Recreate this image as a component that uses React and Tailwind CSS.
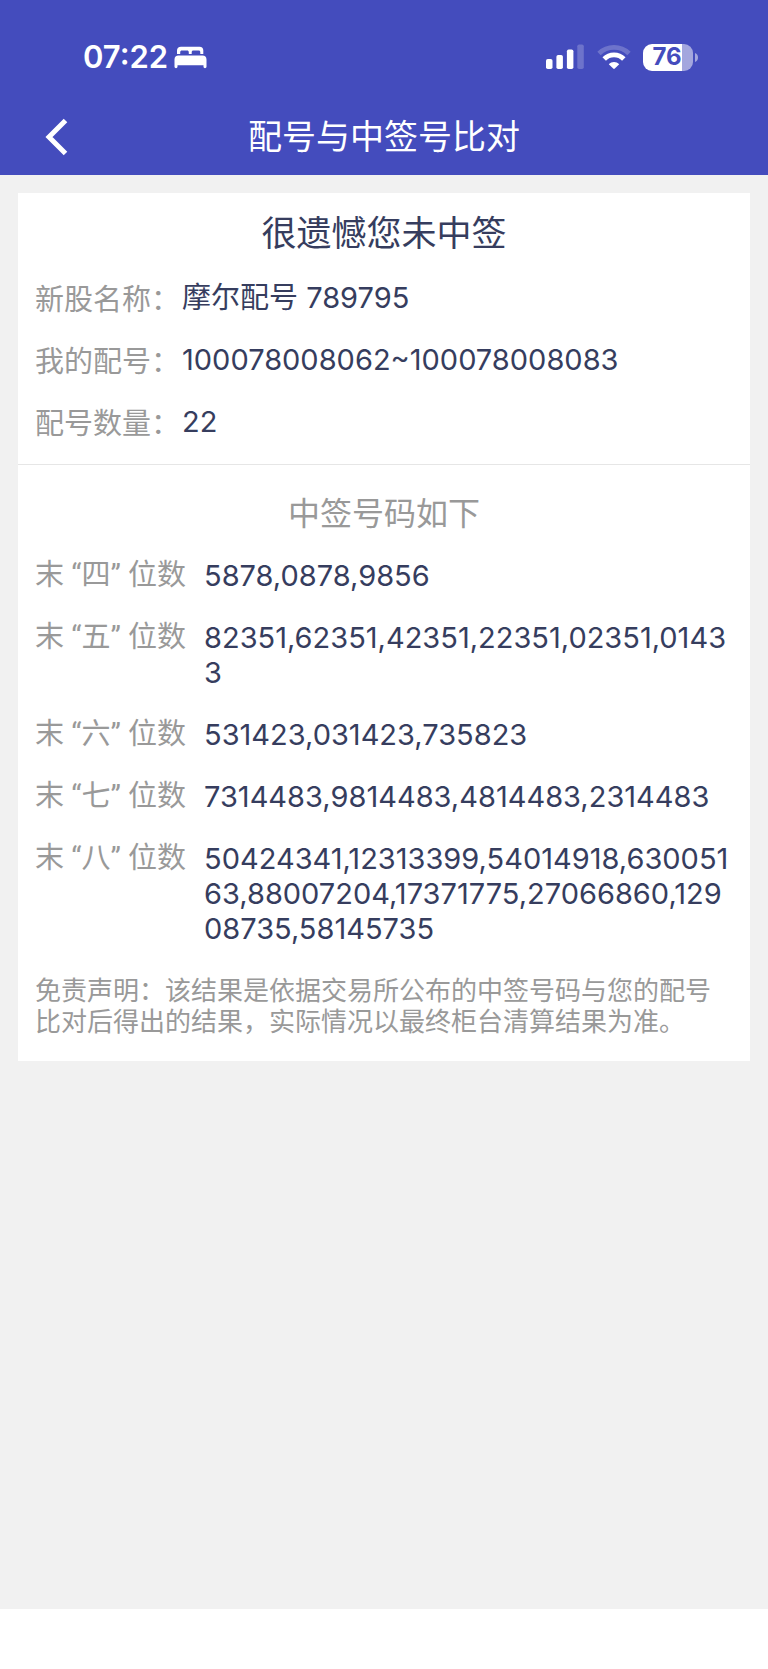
import React from 'react';

const stockInfo = [
  { label: '新股名称：', value: '摩尔配号 789795' },
  { label: '我的配号：', value: '100078008062~100078008083' },
  { label: '配号数量：', value: '22' }
];

const winningNumbers = [
  { digits: '四', numbers: ['5878', '0878', '9856'] },
  { digits: '五', numbers: ['82351', '62351', '42351', '22351', '02351', '01433'] },
  { digits: '六', numbers: ['531423', '031423', '735823'] },
  { digits: '七', numbers: ['7314483', '9814483', '4814483', '2314483'] },
  {
    digits: '八',
    numbers: [
      '50424341', '12313399', '54014918', '63005163', '88007204',
      '17371775', '27066860', '12908735', '58145735'
    ]
  }
];

const BedIcon = () => (
  <svg width="33" height="23" viewBox="0 0 33 23" fill="white" aria-hidden="true">
    <path d="M3 8V4.5C3 2 4.500 .7 7 .7H25.500C28 .7 29.300 2 29.300 4.500V8H26.300V6.500C26.300 5.200 25.700 4.600 24.500 4.600H19.500C18.300 4.600 17.700 5.200 17.700 6.500V8H14.800V6.500C14.800 5.200 14.200 4.600 13 4.600H8C6.800 4.600 6.200 5.200 6.200 6.500V8Z" />
    <path d="M.5 13.500C.5 10.800 2 9.500 4.500 9.500H28.500C31 9.500 32.500 10.800 32.500 13.500V20.800C32.500 22.600 29.500 22.600 29.500 20.800V19.300H3.500V20.800C3.500 22.600.5 22.600.5 20.800Z" />
  </svg>
);

const SignalIcon = () => (
  <svg width="39" height="26" viewBox="0 0 39 26" fill="white" aria-hidden="true">
    <rect x="0" y="15" width="6.500" height="10" rx="1.800" />
    <rect x="10.400" y="11" width="6.500" height="14" rx="1.800" />
    <rect x="20.900" y="5.500" width="6.500" height="19.500" rx="1.800" />
    <rect x="31.300" y="0.500" width="6.500" height="24.500" rx="1.800" opacity="0.22" />
  </svg>
);

const WifiIcon = () => (
  <svg width="34" height="26" viewBox="0 0 34 26" fill="none" aria-hidden="true">
    <path d="M2 9.500A21.500 21.500 0 0 1 32 9.500" stroke="white" strokeOpacity="0.22" strokeWidth="4.800" />
    <path d="M7.200 15A13.500 13.500 0 0 1 26.800 15" stroke="white" strokeWidth="4.800" />
    <path d="M11.800 20.200C14.800 17.100 19.200 17.100 22.200 20.200L17.800 24.600Q17 25.300 16.200 24.600Z" fill="white" />
  </svg>
);

const Battery = () => (
  <div className="flex items-center gap-0.5">
    <div className="flex h-[27px] w-[50px] items-center justify-center rounded-[9px] bg-linear-to-r from-white from-77% to-[#a3a6de] to-77% pr-0.5 text-[24px] leading-none font-bold text-[#444cbd]">
      76
    </div>
    <svg width="3" height="9" viewBox="0 0 3 9" aria-hidden="true">
      <path d="M0 0C4 1.500 4 7.500 0 9Z" fill="#a3a6de" />
    </svg>
  </div>
);

const StatusBar = () => (
  <div className="flex h-[99px] items-center justify-between pt-[15px] pr-[70px] pl-[83px]">
    <div className="flex items-center gap-1.5">
      <span className="text-[31px] leading-9 font-semibold">07:22</span>
      <BedIcon />
    </div>
    <div className="flex items-center gap-3">
      <SignalIcon />
      <WifiIcon />
      <Battery />
    </div>
  </div>
);

const App = () => {
  return (
    <div className="flex min-h-screen flex-col bg-white pb-[60px] font-['Inter','Noto_Sans_CJK_SC',sans-serif]">
      <header className="bg-[#444cbd] text-white">
        <StatusBar />
        <div className="grid h-[76px] grid-cols-[1fr_auto_1fr] items-center">
          <button type="button" aria-label="返回" className="ml-11 w-6">
            <svg width="24" height="38" viewBox="0 0 24 38" fill="none" aria-hidden="true">
              <path d="M21.500 2.500L5 19L21.500 35.500" stroke="white" strokeWidth="5" />
            </svg>
          </button>
          <h1 className="text-[34px] leading-10">配号与中签号比对</h1>
        </div>
      </header>

      <main className="flex-1 bg-[#f1f1f1] p-[18px]">
        <div className="bg-white text-[29px] leading-[35px] text-[#363d5e]">
          <section className="border-b border-[#e6e6e6] px-[17px] pt-5 pb-[25px]">
            <h2 className="text-center text-[35px] leading-10">很遗憾您未中签</h2>
            <dl className="mt-[27px] space-y-[27px]">
              {stockInfo.map((item) => (
                <div key={item.label} className="flex gap-0.5">
                  <dt className="shrink-0 font-['Noto_Sans_CJK_SC',sans-serif] text-[#999999]">{item.label}</dt>
                  <dd className="break-all">{item.value}</dd>
                </div>
              ))}
            </dl>
          </section>

          <section className="px-[17px] pt-[26px] pb-[26px]">
            <h2 className="text-center font-['Noto_Sans_CJK_SC',sans-serif] text-[32px] leading-10 text-[#999999]">
              中签号码如下
            </h2>
            <dl className="mt-[27px] -mr-[5px] space-y-[27px]">
              {winningNumbers.map((row) => (
                <div key={row.digits} className="flex">
                  <dt className="w-[169px] shrink-0 font-['Roboto','Noto_Sans_CJK_SC',sans-serif] text-[#999999]">
                    末 “{row.digits}” 位数
                  </dt>
                  <dd className="flex-1 break-all">{row.numbers.join(',')}</dd>
                </div>
              ))}
            </dl>
            <p className="mt-[27px] pr-3 font-['Noto_Sans_CJK_SC',sans-serif] text-[26px] leading-[31px] text-[#999999]">
              免责声明：该结果是依据交易所公布的中签号码与您的配号比对后得出的结果，实际情况以最终柜台清算结果为准。
            </p>
          </section>
        </div>
      </main>
    </div>
  );
};

export default App;
